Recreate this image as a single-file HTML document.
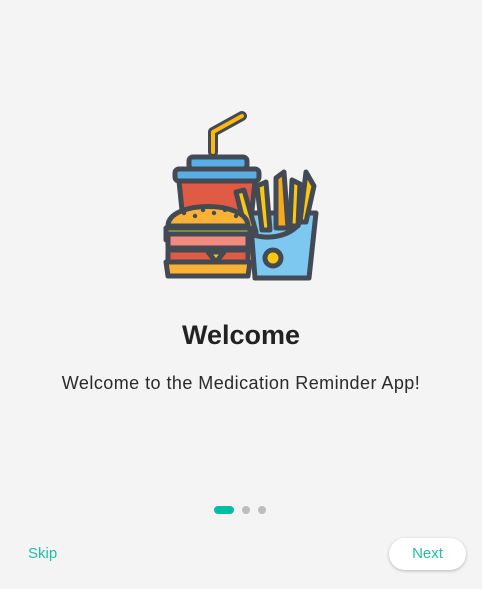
<!DOCTYPE html>
<html><head><style>
html,body{margin:0;padding:0;background:#f4f4f4;width:482px;height:589px;overflow:hidden;font-family:"Liberation Sans",sans-serif;position:relative}
.t{position:absolute;left:0;width:482px;text-align:center;color:#222}
</style></head><body>
<svg style="position:absolute;left:0;top:0" width="482" height="300" viewBox="0 0 482 300">
<g stroke="#434a54" stroke-width="5" stroke-linecap="round" stroke-linejoin="round">
<polyline points="213,152 213,132 242,116" fill="none" stroke="#434a54" stroke-width="10"/>
<polyline points="213,152 213,132 242,116" fill="none" stroke="#fbb80f" stroke-width="4"/>
<rect x="189" y="157" width="58" height="12" rx="4" fill="#5aaee6"/>
<rect x="175" y="169" width="84" height="12" rx="4" fill="#5aaee6"/>
<path d="M179,181 L255,181 L250,230 L184,230 Z" fill="#e15a43"/>
<path d="M250,213 L316,213 L309,278 L255,278 Z" fill="#7dc8f0"/>
<circle cx="273" cy="258" r="8" fill="#fbc70f"/>
<path d="M262,230 L257,186 L266,182 L270,230Z" fill="#fbc70f"/>
<path d="M276,228 L276,178 L284,172 L288,228Z" fill="#f7a81b"/>
<path d="M290,226 L292,180 L300,184 L298,226Z" fill="#fbc70f"/>
<path d="M300,222 L306,172 L314,186 L306,222Z" fill="#fbc70f"/>
<path d="M246,232 L236,192 L244,190 L256,232Z" fill="#fbc70f"/>
<path d="M250,232 C256,240 290,240 300,222" fill="none"/>
<path d="M168,226 C168,200 248,200 248,226 Z" fill="#f9b233"/>
<path d="M166,228 L250,228 L250,240 L166,240 Z" fill="#a6d13d"/>
<path d="M168,234 L248,234 L248,248 L168,248 Z" fill="#f28a80"/>
<path d="M168,250 L248,250 L248,262 L168,262 Z" fill="#e15a43"/>
<path d="M166,262 L250,262 L248,276 L168,276 Z" fill="#f9b233"/>
<path d="M208,252 L216,262 L224,252Z" fill="#fbc70f"/>
</g>
<g fill="#434a54">
<circle cx="184" cy="213" r="2.2"/><circle cx="195" cy="216" r="2.2"/><circle cx="203" cy="210" r="2.2"/><circle cx="214" cy="213" r="2.2"/><circle cx="225" cy="210" r="2.2"/><circle cx="236" cy="216" r="2.2"/>
</g>
</svg>
<div class="t" style="top:320px;font-size:27px;font-weight:bold">Welcome</div>
<div class="t" style="top:373px;font-size:18px;letter-spacing:0.45px;color:#2a2a2a">Welcome to the Medication Reminder App!</div>
<div style="position:absolute;left:214px;top:506px;width:20px;height:8px;border-radius:4px;background:#00bfa5"></div>
<div style="position:absolute;left:242px;top:506px;width:8px;height:8px;border-radius:4px;background:#bdbdbd"></div>
<div style="position:absolute;left:258px;top:506px;width:8px;height:8px;border-radius:4px;background:#bdbdbd"></div>
<div style="position:absolute;left:28px;top:545px;font-size:15px;color:#1fc1a6">Skip</div>
<div style="position:absolute;left:389px;top:538px;width:77px;height:32px;border-radius:16px;background:#fff;box-shadow:0 1px 3px rgba(0,0,0,0.25);text-align:center;line-height:32px;font-size:15px;color:#1fc1a6">Next</div>
</body></html>
